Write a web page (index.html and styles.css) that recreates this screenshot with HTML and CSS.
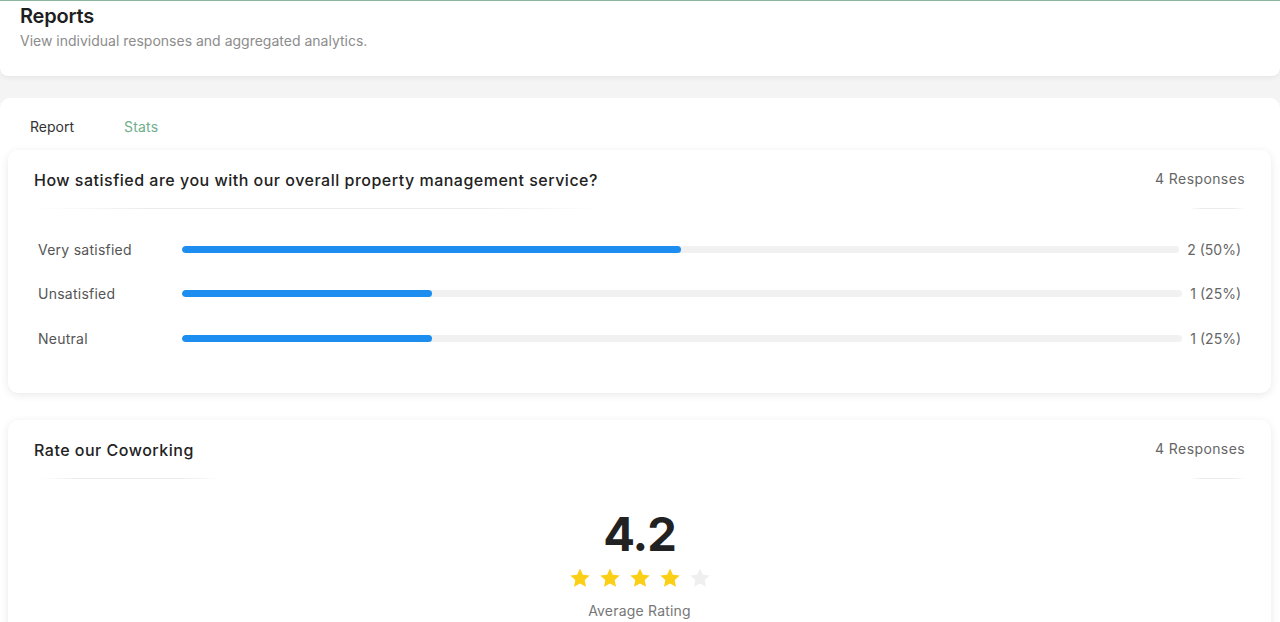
FILE: index.html
```html
<!DOCTYPE html>
<html>
<head>
<meta charset="utf-8">
<link rel="stylesheet" href="styles.css">
</head>
<body>
<header class="header">
  <h1 class="title">Reports</h1>
  <p class="subtitle">View individual responses and aggregated analytics.</p>
</header>
<main class="panel">
  <nav class="tabs">
    <span class="tab">Report</span>
    <span class="tab tab-active">Stats</span>
  </nav>
  <section class="card">
    <div class="card-head">
      <h2 class="q-title">How satisfied are you with our overall property management service?</h2>
      <span class="count">4 Responses</span>
    </div>
    <div class="dividers"><span class="div-left div-wide"></span><span class="div-right"></span></div>
    <div class="rows">
      <div class="row">
        <span class="label">Very satisfied</span>
        <div class="track"><div class="fill" style="width:50%"></div></div>
        <span class="value">2 (50%)</span>
      </div>
      <div class="row">
        <span class="label">Unsatisfied</span>
        <div class="track"><div class="fill" style="width:25%"></div></div>
        <span class="value">1 (25%)</span>
      </div>
      <div class="row">
        <span class="label">Neutral</span>
        <div class="track"><div class="fill" style="width:25%"></div></div>
        <span class="value">1 (25%)</span>
      </div>
    </div>
  </section>
  <section class="card card2">
    <div class="card-head">
      <h2 class="q-title">Rate our Coworking</h2>
      <span class="count">4 Responses</span>
    </div>
    <div class="dividers"><span class="div-left div-narrow"></span><span class="div-right"></span></div>
    <div class="rating">
      <div class="score">4.2</div>
      <div class="stars">
        <svg class="star on" viewBox="0 0 24 24"><path d="M12 2.5l2.9 6.2 6.8.8-5 4.6 1.3 6.7L12 17.5l-6 3.3 1.3-6.7-5-4.6 6.8-.8z"/></svg>
        <svg class="star on" viewBox="0 0 24 24"><path d="M12 2.5l2.9 6.2 6.8.8-5 4.6 1.3 6.7L12 17.5l-6 3.3 1.3-6.7-5-4.6 6.8-.8z"/></svg>
        <svg class="star on" viewBox="0 0 24 24"><path d="M12 2.5l2.9 6.2 6.8.8-5 4.6 1.3 6.7L12 17.5l-6 3.3 1.3-6.7-5-4.6 6.8-.8z"/></svg>
        <svg class="star on" viewBox="0 0 24 24"><path d="M12 2.5l2.9 6.2 6.8.8-5 4.6 1.3 6.7L12 17.5l-6 3.3 1.3-6.7-5-4.6 6.8-.8z"/></svg>
        <svg class="star off" viewBox="0 0 24 24"><path d="M12 2.5l2.9 6.2 6.8.8-5 4.6 1.3 6.7L12 17.5l-6 3.3 1.3-6.7-5-4.6 6.8-.8z"/></svg>
      </div>
      <div class="avg">Average Rating</div>
    </div>
  </section>
</main>
</body>
</html>
```

FILE: styles.css
```css
* { box-sizing: border-box; }
html, body { margin: 0; padding: 0; }
body {
  background: #f4f4f4;
  font-family: Inter, "Noto Sans", sans-serif;
  color: #222;
  height: 622px;
  overflow: hidden;
}
.header {
  background: #fff;
  border-top: 1px solid #8db59e;
  height: 76px;
  padding: 3px 20px 0;
  border-radius: 0 0 8px 8px;
  box-shadow: 0 2px 5px rgba(0,0,0,0.06);
}
.title {
  margin: 0;
  font-size: 20px;
  font-weight: 600;
  color: #1e1e1e;
  line-height: 24px;
  letter-spacing: -0.2px;
}
.subtitle {
  margin: 4px 0 0;
  font-size: 14px;
  color: #8c8c8c;
  line-height: 18px;
}
.panel {
  margin-top: 22px;
  background: #fff;
  border-radius: 10px 10px 0 0;
  padding: 0 9px 0 8px;
  height: 524px;
  overflow: hidden;
}
.tabs {
  display: flex;
  gap: 50px;
  height: 52px;
  align-items: center;
  padding-left: 22px;
  padding-top: 4px;
  font-size: 14px;
}
.tab { color: #333; }
.tab-active { color: #6fae8b; letter-spacing: 0.2px; }
.card {
  background: #fff;
  border-radius: 10px;
  box-shadow: 0 2px 8px rgba(0,0,0,0.09);
  padding: 18px 26px 0 26px;
  height: 243px;
}
.card2 {
  margin-top: 27px;
  height: 260px;
}
.card-head {
  display: flex;
  justify-content: space-between;
  align-items: center;
  height: 24px;
}
.q-title {
  margin: 0;
  font-size: 16px;
  font-weight: 500;
  color: #222;
  letter-spacing: 0.5px;
}
.count {
  font-size: 14px;
  color: #666;
  letter-spacing: 0.4px;
  margin-bottom: 4px;
}
.dividers {
  display: flex;
  justify-content: space-between;
  margin-top: 16px;
  height: 1px;
}
.div-left, .div-right {
  height: 1px;
  background: linear-gradient(90deg, rgba(230,230,230,0), #ececec 20%, #ececec 80%, rgba(230,230,230,0));
}
.div-wide { width: 566px; }
.div-narrow { width: 180px; margin-left: 6px; }
.div-right { width: 56px; margin-right: 0; }
.rows {
  display: flex;
  flex-direction: column;
  gap: 26.5px;
  padding: 31px 4px 0 4px;
}
.row {
  display: flex;
  align-items: center;
  height: 18px;
  font-size: 14px;
}
.label {
  width: 144px;
  color: #555;
  letter-spacing: 0.25px;
}
.track {
  flex: 1;
  height: 7px;
  background: #f1f1f1;
  border-radius: 4px;
  overflow: hidden;
}
.fill {
  height: 100%;
  background: #1d8ef0;
  border-radius: 4px;
}
.value {
  margin-left: 8px;
  color: #666;
  text-align: right;
}
.rating {
  display: flex;
  flex-direction: column;
  align-items: center;
  padding-top: 27px;
}
.score {
  font-size: 47px;
  font-weight: 700;
  color: #222;
  line-height: 56px;
  letter-spacing: -1px;
}
.stars {
  display: flex;
  gap: 6px;
  margin-top: 4px;
}
.star { width: 24px; height: 24px; }
.star.on { fill: #fbcf15; }
.star.off { fill: #efefef; }
.avg {
  margin-top: 12px;
  font-size: 14px;
  color: #777;
  letter-spacing: 0.2px;
}
```
